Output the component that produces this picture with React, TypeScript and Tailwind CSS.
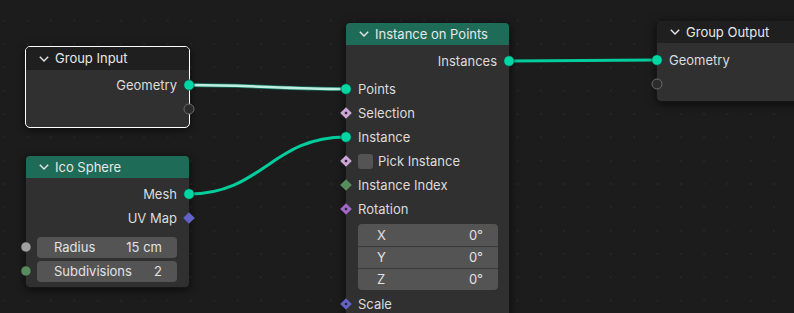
import React from "react";

type Kind =
  | "geo"
  | "empty"
  | "float"
  | "int"
  | "dBool"
  | "dInt"
  | "dRot"
  | "dVec"
  | "dVecSolid";

function SocketShape({ kind }: { kind: Kind }) {
  switch (kind) {
    case "geo":
      return <circle cx="7" cy="7" r="5.2" fill="#00d6a3" stroke="#0b3d30" strokeWidth="0.6" />;
    case "empty":
      return <circle cx="7" cy="7" r="5" fill="#2b2b2b" stroke="#6a6a6a" strokeWidth="1" />;
    case "float":
      return <circle cx="7" cy="7" r="5" fill="#a1a1a1" stroke="#222" strokeWidth="0.5" />;
    case "int":
      return <circle cx="7" cy="7" r="5" fill="#598c5c" stroke="#222" strokeWidth="0.5" />;
    case "dBool":
      return (
        <g>
          <polygon points="7,1.2 12.8,7 7,12.8 1.2,7" fill="#cca6d6" />
          <rect x="5.8" y="5.8" width="2.4" height="2.4" fill="#2a2a2a" />
        </g>
      );
    case "dInt":
      return <polygon points="7,1.2 12.8,7 7,12.8 1.2,7" fill="#598c5c" />;
    case "dRot":
      return (
        <g>
          <polygon points="7,1.2 12.8,7 7,12.8 1.2,7" fill="#a366c9" />
          <rect x="5.8" y="5.8" width="2.4" height="2.4" fill="#2a2a2a" />
        </g>
      );
    case "dVec":
      return (
        <g>
          <polygon points="7,1.2 12.8,7 7,12.8 1.2,7" fill="#6363c7" />
          <rect x="5.8" y="5.8" width="2.4" height="2.4" fill="#2a2a2a" />
        </g>
      );
    case "dVecSolid":
      return <polygon points="7,1.2 12.8,7 7,12.8 1.2,7" fill="#6363c7" />;
  }
}

function Socket({ kind, side }: { kind: Kind; side: "l" | "r" }) {
  return (
    <svg
      viewBox="0 0 14 14"
      className={
        side === "l"
          ? "absolute left-[-7px] top-1/2 -translate-y-1/2 w-[14px] h-[14px]"
          : "absolute right-[-7px] top-1/2 -translate-y-1/2 w-[14px] h-[14px]"
      }
    >
      <SocketShape kind={kind} />
    </svg>
  );
}

function Chevron() {
  return (
    <svg viewBox="0 0 10 6" className="w-[10px] h-[6px] shrink-0">
      <polyline points="0.8,0.8 5,5 9.2,0.8" fill="none" stroke="#e6e6e6" strokeWidth="1.4" />
    </svg>
  );
}

function Header({ title, h, teal }: { title: string; h: string; teal?: boolean }) {
  return (
    <div
      className={
        (teal ? "bg-[#1e6b58] " : "bg-[#1f1f1f] ") +
        h +
        " flex items-center pl-[13px] gap-[6px] rounded-t-[4px] text-[#e8e8e8]"
      }
    >
      <Chevron />
      <span>{title}</span>
    </div>
  );
}

function OutRow({ label, kind }: { label?: string; kind: Kind }) {
  return (
    <div className="relative h-[24px] flex items-center justify-end pr-[12px]">
      {label && <span>{label}</span>}
      <Socket kind={kind} side="r" />
    </div>
  );
}

function InRow({ label, kind }: { label?: string; kind: Kind }) {
  return (
    <div className="relative h-[24px] flex items-center pl-[12px]">
      {label && <span>{label}</span>}
      <Socket kind={kind} side="l" />
    </div>
  );
}

function FieldRow({ label, value, kind }: { label: string; value: string; kind: Kind }) {
  return (
    <div className="relative h-[24px] flex items-center pl-[11px] pr-[12px]">
      <Socket kind={kind} side="l" />
      <div className="flex-1 h-[21px] rounded-[4px] bg-[#545454] flex items-center justify-between pl-[17px] pr-[15px] text-[#e2e2e2]">
        <span>{label}</span>
        <span>{value}</span>
      </div>
    </div>
  );
}

function CheckRow({ label, kind }: { label: string; kind: Kind }) {
  return (
    <div className="relative h-[24px] flex items-center pl-[12px] gap-[5px]">
      <Socket kind={kind} side="l" />
      <div className="w-[15px] h-[15px] rounded-[3px] bg-[#545454]" />
      <span>{label}</span>
    </div>
  );
}

function VectorBox() {
  const rows = [
    ["X", "0°"],
    ["Y", "0°"],
    ["Z", "0°"],
  ];
  return (
    <div className="mt-[3px] ml-[12px] mr-[11px] rounded-[4px] bg-[#545454] flex flex-col overflow-hidden text-[#e2e2e2]">
      {rows.map(([a, b], i) => (
        <div
          key={a}
          className={
            (i > 0 ? "border-t border-[#3a3a3a] " : "") +
            "h-[22px] flex items-center justify-between pl-[19px] pr-[15px]"
          }
        >
          <span>{a}</span>
          <span>{b}</span>
        </div>
      ))}
    </div>
  );
}

export default function App() {
  return (
    <div className="relative w-[794px] h-[313px] overflow-hidden bg-[#1c1c1c] bg-[radial-gradient(circle,#262626_0.9px,transparent_1.3px)] bg-[size:23.333px_23.333px] bg-[position:16px_9px] font-[Inter] text-[13px] leading-none text-[#dcdcdc]">
      {/* links */}
      <svg className="absolute inset-0 w-[794px] h-[313px]" viewBox="0 0 794 313">
        <path d="M189 85 C 250 85, 285 89, 346 89" fill="none" stroke="#0f7a60" strokeWidth="4" />
        <path d="M189 85 C 250 85, 285 89, 346 89" fill="none" stroke="#c2eee2" strokeWidth="2.4" />
        <path d="M509 61 L 657 60" fill="none" stroke="#00cc9c" strokeWidth="3" />
        <path d="M189 194 C 262 194, 272 137, 346 137" fill="none" stroke="#00cc9c" strokeWidth="3" />
      </svg>

      {/* Group Input (selected) */}
      <div className="absolute left-[25px] top-[46px] w-[165px] rounded-[5px] border border-white bg-[#303030] shadow-[0_2px_8px_rgba(0,0,0,0.6)]">
        <Header title="Group Input" h="h-[23px]" />
        <div className="pt-[3px] pb-[6px]">
          <OutRow label="Geometry" kind="geo" />
          <OutRow kind="empty" />
        </div>
      </div>

      {/* Ico Sphere */}
      <div className="absolute left-[25px] top-[155px] w-[165px] rounded-[5px] border border-[#161616] bg-[#303030] shadow-[0_2px_8px_rgba(0,0,0,0.6)]">
        <Header title="Ico Sphere" h="h-[22px]" teal />
        <div className="pt-[4px] pb-[4px]">
          <OutRow label="Mesh" kind="geo" />
          <OutRow label="UV Map" kind="dVecSolid" />
          <div className="h-[5px]" />
          <FieldRow label="Radius" value="15 cm" kind="float" />
          <FieldRow label="Subdivisions" value="2" kind="int" />
        </div>
      </div>

      {/* Instance on Points */}
      <div className="absolute left-[345px] top-[22px] w-[165px] h-[320px] rounded-[5px] border border-[#161616] bg-[#303030] shadow-[0_2px_8px_rgba(0,0,0,0.6)]">
        <Header title="Instance on Points" h="h-[22px]" teal />
        <div className="pt-[4px]">
          <OutRow label="Instances" kind="geo" />
          <div className="h-[4px]" />
          <InRow label="Points" kind="geo" />
          <InRow label="Selection" kind="dBool" />
          <InRow label="Instance" kind="geo" />
          <CheckRow label="Pick Instance" kind="dBool" />
          <InRow label="Instance Index" kind="dInt" />
          <InRow label="Rotation" kind="dRot" />
          <VectorBox />
          <div className="h-[2px]" />
          <InRow label="Scale" kind="dVec" />
        </div>
      </div>

      {/* Group Output */}
      <div className="absolute left-[656px] top-[20px] w-[170px] rounded-[5px] border border-[#161616] bg-[#303030] shadow-[0_2px_8px_rgba(0,0,0,0.6)]">
        <Header title="Group Output" h="h-[22px]" />
        <div className="pt-[5px] pb-[5px]">
          <InRow label="Geometry" kind="geo" />
          <InRow kind="empty" />
        </div>
      </div>
    </div>
  );
}
